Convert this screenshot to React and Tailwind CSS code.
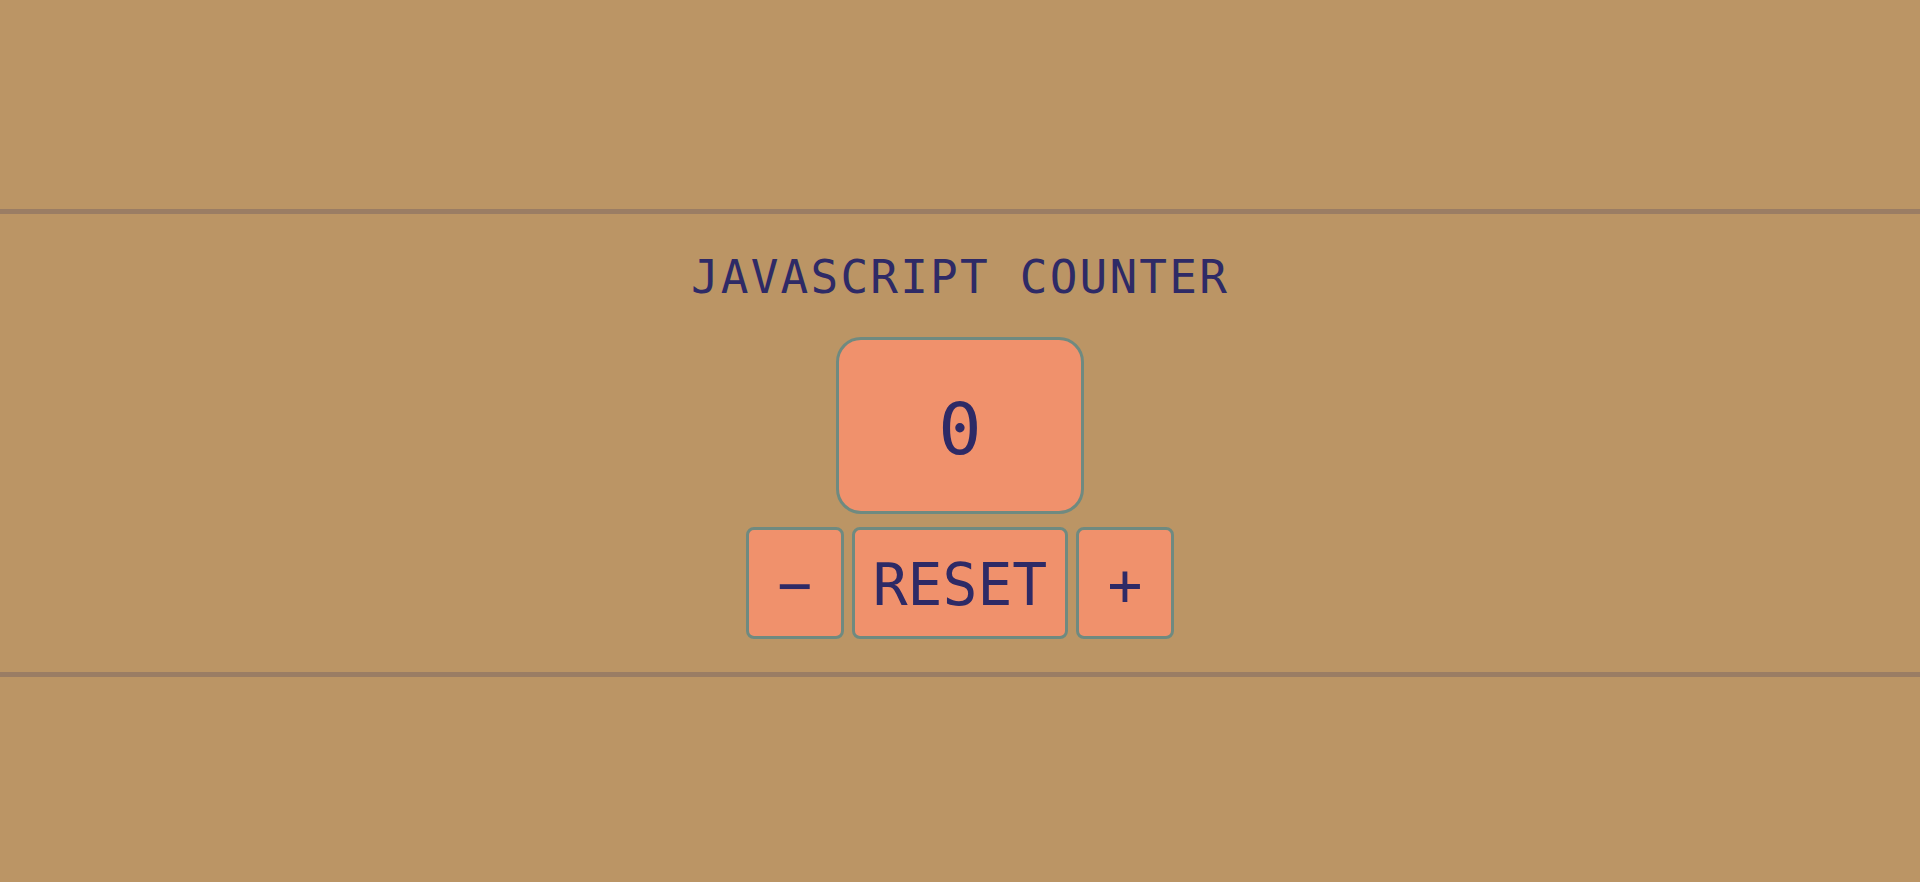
export default function App() {
  const font = { fontFamily: '"DejaVu Sans Mono", "Liberation Mono", monospace' };
  return (
    <div className="min-h-[882px] w-full bg-[#bb9565] text-[#2e2a66]" style={font}>
      <div className="h-[209px]" />
      <div className="flex flex-col items-center border-y-[5px] border-[#9a7d64] pt-[40px] h-[468px]">
        <h1 className="text-[46px] leading-none font-normal tracking-[2.2px] m-0">JAVASCRIPT COUNTER</h1>
        <div className="mt-[37px] flex h-[177px] w-[248px] items-center justify-center rounded-[25px] border-[3px] border-[#6f8a80] bg-[#f0916c] pt-[6px] text-[72px] leading-none">
          0
        </div>
        <div className="mt-[13px] flex gap-[8px]">
          <button className="flex h-[112px] w-[98px] items-center justify-center rounded-[8px] border-[3px] border-[#6f8a80] bg-[#f0916c] text-[58px] leading-none pt-[4px]">
            −
          </button>
          <button className="flex h-[112px] w-[216px] items-center justify-center rounded-[8px] border-[3px] border-[#6f8a80] bg-[#f0916c] text-[58px] leading-none pt-[4px]">
            RESET
          </button>
          <button className="flex h-[112px] w-[98px] items-center justify-center rounded-[8px] border-[3px] border-[#6f8a80] bg-[#f0916c] text-[58px] leading-none pt-[4px]">
            +
          </button>
        </div>
      </div>
    </div>
  );
}
